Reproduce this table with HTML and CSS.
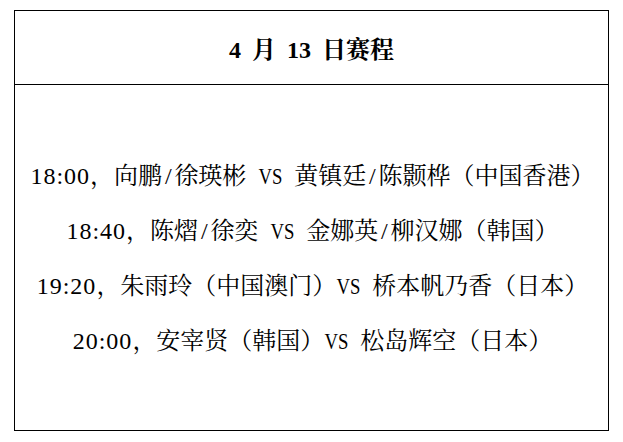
FILE: index.html
```html
<!DOCTYPE html>
<html lang="zh-CN">
<head>
<meta charset="utf-8">
<title>4 月 13 日赛程</title>
<link rel="stylesheet" href="styles.css">
</head>
<body>
<div class="page">
  <div class="table">
    <div class="header">4 月 13 日赛程</div>
    <div class="body">
      <div class="row"><span class="time">18:00</span>，向鹏<span class="sep">/</span>徐瑛彬 <span class="vs">VS</span> 黄镇廷<span class="sep">/</span>陈颢桦（中国香港）</div>
      <div class="row"><span class="time">18:40</span>，陈熠<span class="sep">/</span>徐奕 <span class="vs">VS</span> 金娜英<span class="sep">/</span>柳汉娜（韩国）</div>
      <div class="row"><span class="time">19:20</span>，朱雨玲（中国澳门）<span class="vs">VS</span> 桥本帆乃香（日本）</div>
      <div class="row"><span class="time">20:00</span>，安宰贤（韩国）<span class="vs">VS</span> 松岛辉空（日本）</div>
    </div>
  </div>
</div>
</body>
</html>
```

FILE: styles.css
```css
html, body {
  margin: 0;
  padding: 0;
  background: #ffffff;
}
.page {
  padding: 10px 0 0 14px;
}
.table {
  box-sizing: border-box;
  width: 595px;
  height: 421px;
  border: 1px solid #000000;
  display: flex;
  flex-direction: column;
  font-family: "Liberation Serif", "AR PL UMing CN", "Noto Serif CJK SC", "Noto Sans CJK SC", serif;
  color: #000000;
}
.header {
  box-sizing: border-box;
  height: 74px;
  border-bottom: 1px solid #000000;
  display: flex;
  align-items: center;
  justify-content: center;
  font-size: 24px;
  font-weight: bold;
  word-spacing: 5px;
}
.body {
  flex: 1;
  display: flex;
  flex-direction: column;
  justify-content: center;
  padding-top: 3px;
}
.row {
  text-align: center;
  font-size: 24px;
  line-height: 55px;
  white-space: nowrap;
  word-spacing: 6px;
  padding-left: 2px;
}
.time {
  letter-spacing: 1px;
}
.sep {
  margin: 0 2.8px;
}
.vs {
  display: inline-block;
  transform: scaleX(0.78);
  margin: 0 -3.4px;
}
```
